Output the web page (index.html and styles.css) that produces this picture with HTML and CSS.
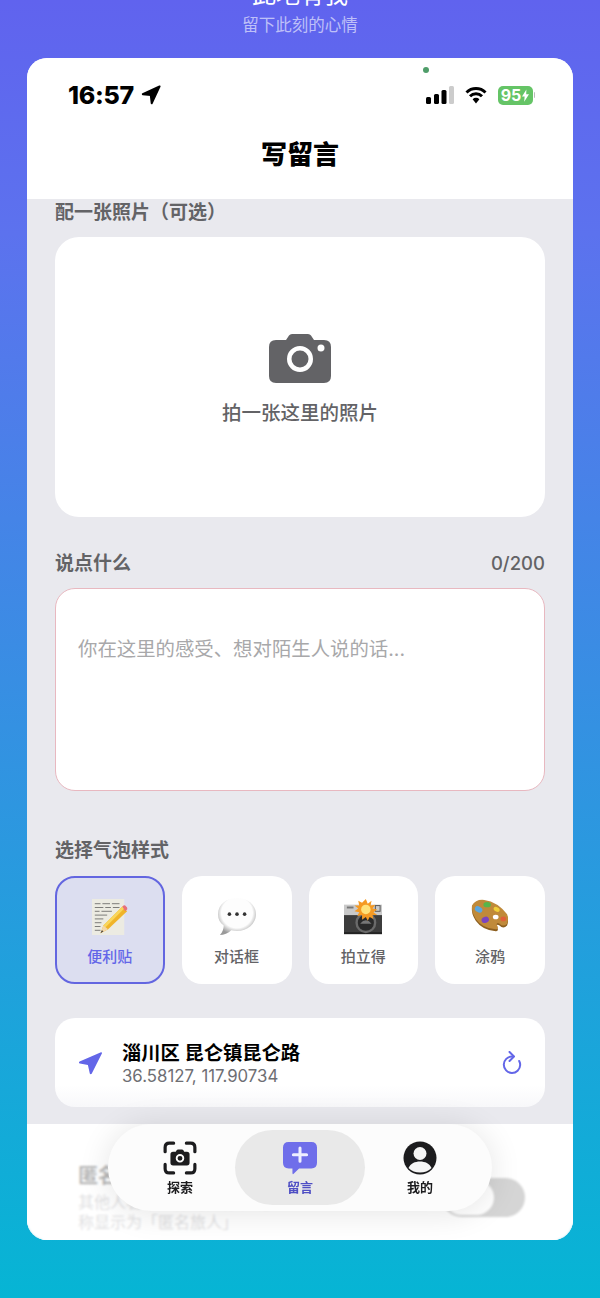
FILE: index.html
```html
<!DOCTYPE html>
<html lang="zh-CN">
<head>
  <meta charset="UTF-8">
  <title>写留言</title>
  <link rel="stylesheet" href="styles.css">
</head>
<body>

  <div class="hero">
    <h1>此地有我</h1>
    <p>留下此刻的心情</p>
  </div>

  <div class="phone">
    <div class="status">
      <div class="status-left">
        <span class="time">16:57</span>
        <svg class="status-arrow" viewBox="0 0 20 20"><path d="M18.600 1.400 1.800 9.200l8 .9.900 8.100z" fill="#000" stroke="#000" stroke-width="2" stroke-linejoin="round"/></svg>
      </div>
      <span class="dot"></span>
      <div class="status-right">
        <svg class="signal" viewBox="0 0 28 18">
          <rect x="0" y="11" width="5" height="7" rx="1.500" fill="#000"/>
          <rect x="8" y="8" width="5" height="10" rx="1.500" fill="#000"/>
          <rect x="15.500" y="4" width="5" height="14" rx="1.500" fill="#000"/>
          <rect x="23" y="0" width="5" height="18" rx="1.500" fill="#ccc"/>
        </svg>
        <svg class="wifi" viewBox="0 0 22 18">
          <path d="M1.500 6.500a13.500 13.500 0 0 1 19 0M5 10.200a8.600 8.600 0 0 1 12 0" fill="none" stroke="#000" stroke-width="3"/>
          <path d="M7.600 13.200a4.900 4.900 0 0 1 6.800 0L11 17.400z" fill="#000"/>
        </svg>
        <div class="battery">
          <span class="battery-body">95<svg class="bolt" viewBox="0 0 8 14"><path d="M5 0 0 8h3L2.500 14 8 5.500H4.800z" fill="#fff"/></svg></span>
          <span class="battery-cap"></span>
        </div>
      </div>
    </div>
    <div class="nav">写留言</div>

    <div class="content">
      <div class="label label-first">配一张照片（可选）</div>
      <div class="photo">
        <svg class="photo-icon" viewBox="0 0 62 49">
          <path fill-rule="evenodd" fill="#636366" d="M7 6h10l3-4.500Q21 0 23 0h16q2 0 3 1.500L45 6h10q7 0 7 7v29q0 7-7 7H7q-7 0-7-7V13q0-7 7-7zM31 12a13 13 0 1 0 0 26 13 13 0 0 0 0-26zm0 4.500a8.500 8.500 0 1 1 0 17 8.500 8.500 0 0 1 0-17zM52 10.500a3.500 3.500 0 1 0 0 7 3.500 3.500 0 0 0 0-7z"/>
        </svg>
        <span class="photo-text">拍一张这里的照片</span>
      </div>

      <div class="label label-row"><span>说点什么</span><span class="count">0/200</span></div>
      <div class="textbox">你在这里的感受、想对陌生人说的话...</div>

      <div class="label label-style">选择气泡样式</div>
      <div class="styles">
        <div class="style-card active">
          <svg class="emoji" viewBox="0 0 40 40">
            <rect x="1" y="1" width="34" height="38" fill="#ecebe2"/>
            <path d="M4 6h6m2 0h8m2 0h8M4 10h9m2 0h6m2 0h7M4 14h5m2 0h11M4 18h13M4 22h9M4 26h7M4 30h6M4 34h6" stroke="#5a5a58" stroke-width=".8" fill="none"/>
            <path d="M33 9 38 14 18 33 10 37 13 29z" fill="#f0b429"/>
            <path d="M13 29 33 9 35 11 15 31z" fill="#f9d65c"/>
            <path d="M33 9q2-2 3-1l2 2q1 2-1 3l-1 1z" fill="#e8707a"/>
            <path d="M13 29 18 33 10 37z" fill="#f3d7a8"/>
            <path d="M11.500 34 13 35 10 37z" fill="#333"/>
          </svg>
          <span>便利贴</span>
        </div>
        <div class="style-card">
          <svg class="emoji" viewBox="0 0 40 40">
            <defs><radialGradient id="bubble" cx=".5" cy=".4" r=".6"><stop offset=".68" stop-color="#fdfdfd"/><stop offset="1" stop-color="#9a9a9a"/></radialGradient></defs>
            <path d="M20 0C9 0 0 7 0 17c0 5 2 9 6 12 0 3-1 7-4 10 4 0 9-2 12-5 2 .5 4 .8 6 .8 11 0 20-8 20-17.800S31 0 20 0z" fill="url(#bubble)"/>
            <circle cx="12" cy="17" r="1.900" fill="#333"/><circle cx="20" cy="17" r="1.900" fill="#333"/><circle cx="28" cy="17" r="1.900" fill="#333"/>
          </svg>
          <span>对话框</span>
        </div>
        <div class="style-card">
          <svg class="emoji" viewBox="0 0 40 40">
            <rect x="0" y="7" width="40" height="12" fill="#c9c9c9"/>
            <rect x="0" y="18" width="40" height="20" fill="#3c3c3c"/>
            <rect x="0" y="36" width="40" height="2" fill="#222"/>
            <circle cx="23" cy="26" r="11" fill="#6a6a6a"/>
            <circle cx="23" cy="26" r="8.500" fill="#2a2a2a"/>
            <path d="M17 27q6-7 12 0z" fill="#777"/>
            <rect x="33" y="8" width="5" height="6" fill="none" stroke="#555"/>
            <rect x="3" y="9" width="7" height="2" fill="#777"/>
            <path d="M23 1l2 5 4-3-1 5 5-1-3 4 5 1-4 3 4 3-5 0 1 4-4-2-2 4-2-4-4 3 0-5-5 1 2-4-5-1 4-3-4-3 5 0-1-5 4 2z" fill="#f59a23"/>
            <circle cx="23" cy="12" r="5" fill="#ffe27a"/>
          </svg>
          <span>拍立得</span>
        </div>
        <div class="style-card">
          <svg class="emoji" viewBox="0 0 40 40">
            <path d="M1 10Q5 3 14 4 28 6 38 19 40 24 38 29 34 33 30 29 27 27 27 30 30 35 26 35 12 34 5 24 0 16 1 10z" fill="#8d5f20"/>
            <path d="M1 8Q5 1 14 2 28 4 38 17 40 22 38 27 34 31 30 27 27 25 27 28 30 33 26 33 12 32 5 22 0 14 1 8z" fill="#c08a3a"/>
            <ellipse cx="8" cy="12" rx="4.200" ry="3" fill="#5aa7e0" transform="rotate(30 8 12)"/>
            <ellipse cx="17" cy="7" rx="4" ry="2.800" fill="#58b54a"/>
            <ellipse cx="27" cy="12" rx="3.400" ry="2.300" fill="#f0cf3a" transform="rotate(30 27 12)"/>
            <ellipse cx="15" cy="23" rx="4" ry="3.200" fill="#7b45c0" transform="rotate(-20 15 23)"/>
            <ellipse cx="34" cy="22" rx="3" ry="2.600" fill="#e0603a"/>
            <ellipse cx="26" cy="20" rx="3" ry="2.400" fill="#fff"/>
          </svg>
          <span>涂鸦</span>
        </div>
      </div>

      <div class="location">
        <svg class="loc-icon" viewBox="0 0 24 24"><path d="M23 1.200 1.600 10.600c-1 .5-.8 1.800.3 2l8 1.500 1.900 8.300c.3 1 1.500 1.100 2 .2L24 2.300c.2-.7-.4-1.300-1-1.100z" fill="#6366e8"/></svg>
        <div class="loc-info">
          <div class="loc-name">淄川区 昆仑镇昆仑路</div>
          <div class="loc-coords">36.58127, 117.90734</div>
        </div>
        <svg class="refresh" viewBox="0 0 20 24"><path d="M10 5.500A8.200 8.200 0 1 0 18.200 14c0-1.500-.4-2.800-1-4" fill="none" stroke="#6366e8" stroke-width="2" stroke-linecap="round"/><path d="M7.500 1 12 5.500 7.500 10" fill="none" stroke="#6366e8" stroke-width="2" stroke-linecap="round" stroke-linejoin="round"/></svg>
      </div>

      <div class="anon">
        <div class="anon-text">
          <div class="anon-title">匿名发布</div>
          <div class="anon-desc">其他人看不到你的头像和昵称显示为「匿名旅人」</div>
        </div>
        <div class="toggle"><span class="knob"></span></div>
      </div>
    </div>

    <div class="tab-veil"></div>
    <div class="tabs">
      <div class="tab">
        <svg class="tab-icon tab-scan" viewBox="0 0 32 32">
          <path d="M2 10V6q0-4 4-4h4M22 2h4q4 0 4 4v4M30 22v4q0 4-4 4h-4M10 30H6q-4 0-4-4v-4" fill="none" stroke="#1c1c1e" stroke-width="3" stroke-linecap="round"/>
          <path fill-rule="evenodd" fill="#1c1c1e" d="M9.500 10H12l1-1.500q.5-.5 1-.5h4q.5 0 1 .5l1 1.500h2.500q2.500 0 2.500 2.500v8q0 2.500-2.500 2.500h-13Q7 23 7 20.500v-8Q7 10 9.500 10zM16 12.300a4 4 0 1 0 0 8 4 4 0 0 0 0-8zm0 1.700a2.300 2.300 0 1 1 0 4.600 2.300 2.300 0 0 1 0-4.600z"/>
        </svg>
        <span>探索</span>
      </div>
      <div class="tab tab-active">
        <svg class="tab-icon" viewBox="0 0 36 34">
          <path d="M6 0h24q6 0 6 6v16q0 6-6 6H17l-6 6q-1 .6-1-1v-5H6q-6 0-6-6V6q0-6 6-6z" fill="#6f6eea"/>
          <path d="M18 6.500v14M11 13.500h14" stroke="#eef" stroke-width="3.200" stroke-linecap="round"/>
        </svg>
        <span>留言</span>
      </div>
      <div class="tab">
        <svg class="tab-icon" viewBox="0 0 34 34">
          <circle cx="17" cy="17" r="16.500" fill="#1c1c1e"/>
          <circle cx="17" cy="12.500" r="6.500" fill="#f5f5f5"/>
          <path d="M5.500 27c2-4.500 6.500-6.500 11.500-6.500s9.500 2 11.500 6.500c-3 3-7 4.500-11.500 4.500S8.500 30 5.500 27z" fill="#f5f5f5"/>
        </svg>
        <span>我的</span>
      </div>
    </div>
  </div>

</body>
</html>
```

FILE: styles.css
```css
* {
  box-sizing: border-box;
}
html, body {
  height: 100%;
}
body {
  margin: 0;
  height: 1298px;
  overflow: hidden;
  font-family: Inter, "Noto Sans CJK SC", sans-serif;
  background: linear-gradient(180deg, #6063ee 0%, #5c72ee 18%, #06b5d4 100%);
}
.hero {
  height: 58px;
  text-align: center;
  color: #fff;
}
.hero h1 {
  margin: 0;
  height: 15px;
  font-size: 24px;
  font-weight: 400;
  line-height: 12px;
  transform: translateY(-11px);
}
.hero p {
  margin: 0;
  font-size: 16.500px;
  line-height: 20px;
  color: rgba(255,255,255,0.6);
}

.phone {
  position: relative;
  height: 1182px;
  margin: 0 27px;
  border-radius: 20px;
  overflow: hidden;
  background: #e9e9ee;
}
.status {
  position: relative;
  height: 64px;
  padding: 10px 38px 0 41px;
  display: flex;
  justify-content: space-between;
  align-items: center;
  background: #fff;
}
.status-left {
  display: flex;
  align-items: center;
  gap: 7px;
}
.time {
  font-size: 25px;
  font-weight: 800;
  letter-spacing: -0.3px;
  color: #000;
}
.status-arrow {
  width: 20px;
  height: 20px;
}
.dot {
  position: absolute;
  left: 396px;
  top: 9px;
  width: 6px;
  height: 6px;
  border-radius: 50%;
  background: #4f9d69;
}
.status-right {
  display: flex;
  align-items: center;
  gap: 11px;
}
.signal {
  width: 28px;
  height: 18px;
}
.wifi {
  width: 22px;
  height: 18px;
}
.battery {
  display: flex;
  align-items: center;
  gap: 1px;
}
.battery-body {
  display: flex;
  align-items: center;
  justify-content: center;
  gap: 1px;
  width: 35px;
  height: 19px;
  border-radius: 5px;
  background: #65c466;
  color: #fff;
  font-size: 16px;
  font-weight: 700;
}
.bolt {
  width: 7px;
  height: 13px;
}
.battery-cap {
  width: 1.500px;
  height: 6px;
  background: #bbb;
  border-radius: 0 1px 1px 0;
}
.nav {
  height: 77px;
  display: flex;
  align-items: center;
  justify-content: center;
  padding-bottom: 17px;
  background: #fff;
  font-size: 26px;
  font-weight: 900;
  color: #000;
}

.content {
  padding: 0 28px;
}
.label {
  font-size: 19px;
  font-weight: 600;
  color: #636366;
  line-height: 27px;
}
.label-first {
  height: 38px;
}
.photo {
  height: 280px;
  border-radius: 24px;
  background: #fff;
  display: flex;
  flex-direction: column;
  align-items: center;
  justify-content: center;
  gap: 16px;
  padding-top: 7px;
}
.photo-icon {
  width: 62px;
  height: 49px;
}
.photo-text {
  font-size: 19.500px;
  font-weight: 500;
  line-height: 28px;
  color: #636366;
}
.label-row {
  display: flex;
  justify-content: space-between;
  margin-top: 33px;
  height: 38px;
}
.count {
  font-size: 18.500px;
  font-weight: 500;
}
.textbox {
  height: 203px;
  border: 1px solid #e8b8c0;
  border-radius: 20px;
  background: #fff;
  padding: 46px 22px 0;
  font-size: 19.400px;
  line-height: 28px;
  color: #a8a8aa;
}
.label-style {
  margin-top: 46px;
  height: 39px;
}
.styles {
  display: grid;
  grid-template-columns: repeat(4, 1fr);
  gap: 17px;
  height: 108px;
}
.style-card {
  border-radius: 20px;
  background: #fff;
  display: flex;
  flex-direction: column;
  align-items: center;
  padding-top: 22px;
  gap: 9px;
  font-size: 15px;
  font-weight: 500;
  line-height: 24px;
  color: #636366;
}
.style-card.active {
  background: #dcdef0;
  border: 2px solid #6366e0;
  padding-top: 20px;
  color: #6366e8;
}
.emoji {
  width: 38px;
  height: 38px;
}
.location {
  margin-top: 34px;
  height: 89px;
  border-radius: 20px;
  background: linear-gradient(180deg, #fff 75%, #f8f8fa 100%);
  display: flex;
  align-items: center;
  padding: 0 23px 0 23px;
}
.loc-icon {
  width: 24px;
  height: 24px;
  margin-right: 20px;
}
.loc-info {
  flex: 1;
}
.loc-name {
  font-size: 19.300px;
  font-weight: 700;
  line-height: 26px;
  color: #000;
}
.loc-coords {
  font-size: 16.800px;
  line-height: 20px;
  color: #6e6e73;
}
.refresh {
  width: 20px;
  height: 24px;
}
.anon {
  margin: 17px -28px 0;
  height: 116px;
  display: flex;
  align-items: flex-start;
  justify-content: space-between;
  padding: 38px 48px 0 51px;
  background: #fff;
}
.anon-title {
  font-size: 20px;
  font-weight: 700;
  line-height: 28px;
  color: #000;
}
.anon-desc {
  width: 200px;
  margin-top: 2px;
  font-size: 16px;
  line-height: 20px;
  color: #8e8e93;
}
.toggle {
  width: 83px;
  height: 39px;
  margin-top: 16px;
  padding: 2px;
  border-radius: 20px;
  background: #686868;
}
.knob {
  display: block;
  width: 50px;
  height: 35px;
  border-radius: 18px;
  background: #fff;
}

.tab-veil {
  position: absolute;
  left: 0;
  right: 0;
  top: 1066px;
  bottom: 0;
  background: rgba(255,255,255,0.72);
  backdrop-filter: blur(1px);
}
.tabs {
  position: absolute;
  left: 81px;
  top: 1066px;
  width: 384px;
  height: 87px;
  padding: 6px 12px;
  border-radius: 44px;
  background: #fcfcfc;
  box-shadow: 0 2px 32px rgba(0,0,0,0.11);
  display: grid;
  grid-template-columns: repeat(3, 120px);
}
.tab {
  display: flex;
  flex-direction: column;
  align-items: center;
  gap: 3px;
  padding-top: 11px;
  font-size: 13px;
  font-weight: 600;
  line-height: 18px;
  color: #1c1c1e;
}
.tab-active {
  margin: 0 -5px;
  border-radius: 38px;
  background: #e9e9e9;
  color: #4f4fc4;
}
.tab-icon {
  width: 34px;
  height: 34px;
}
```
